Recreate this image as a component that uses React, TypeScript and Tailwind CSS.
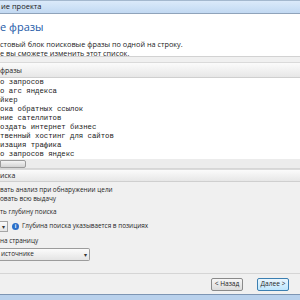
import React from 'react';

const phrases = [
  'о запросов',
  'о агс яндекса',
  'йкер',
  'ока обратных ссылок',
  'ние сателлитов',
  'оздать интернет бизнес',
  'твенный хостинг для сайтов',
  'изация трафика',
  'о запросов яндекс',
];

const SectionBand = ({ label, h }: { label: string; h: string }) => (
  <div className={`${h} flex items-center border-t border-b border-t-[#dadada] border-b-[#cfcfcf] bg-gradient-to-b from-[#fbfbfb] to-[#e7e7e7] text-[7px] text-[#1e1e1e]`}>
    {label}
  </div>
);

export default function App() {
  return (
    <div className="w-[300px] h-[300px] overflow-hidden flex flex-col bg-[#f0f0f0] font-['Open_Sans','Noto_Sans',sans-serif] leading-none">
      {/* Title bar */}
      <div className="h-[14px] shrink-0 flex items-center border-t border-b border-t-[#a4b8ce] border-b-[#8fa3ba] bg-gradient-to-b from-[#dbeafa] to-[#c2d9f2] text-[7.5px] text-[#1a1a1a] pl-[1px]">
        ие проекта
      </div>

      {/* Header */}
      <div className="h-[43px] shrink-0 bg-white border-b border-[#d2d2d2] flex flex-col pt-[6px]">
        <div className="text-[11px] text-[#1c5aa8] leading-[14px]">е фразы</div>
        <div className="mt-[6px] text-[7.3px] text-[#222] leading-[8px]">стовый блок поисковые фразы по одной на строку.</div>
        <div className="text-[7.3px] text-[#222] leading-[8px] mt-[1px]">е вы сможете изменить этот список.</div>
      </div>

      <div className="h-[5px] shrink-0" />
      <SectionBand label="фразы" h="h-[16px] shrink-0" />

      {/* Phrase list */}
      <div className="h-[81px] shrink-0 bg-white flex flex-col font-['Liberation_Mono','DejaVu_Sans_Mono',monospace] text-[7.3px] text-[#1a1a1a]">
        {phrases.map((p, i) => (
          <div key={i} className="h-[9px] flex items-center whitespace-pre">{p}</div>
        ))}
      </div>

      {/* Horizontal scrollbar */}
      <div className="h-[10px] shrink-0 flex items-center bg-[#ececec] border-b border-[#d6d6d6]">
        <div className="h-[8px] w-[26px] rounded-r-[2px] border border-[#9b9b9b] bg-gradient-to-b from-[#f4f4f4] to-[#d4d4d4]" />
      </div>

      <SectionBand label="иска" h="h-[13px] shrink-0" />

      {/* Options */}
      <div className="flex-1 flex flex-col text-[6.4px] text-[#1e1e1e]">
        <div className="h-[4px]" />
        <div className="h-[9px] flex items-center">вать анализ при обнаружении цели</div>
        <div className="h-[9px] flex items-center">овать всю выдачу</div>
        <div className="h-[4px]" />
        <div className="h-[9px] flex items-center">ть глубину поиска</div>
        <div className="h-[4px]" />
        <div className="h-[11px] flex items-center">
          <div className="h-[11px] w-[8px] border border-l-0 border-[#a5a5a5] bg-gradient-to-b from-[#fafafa] to-[#e6e6e6] flex items-center justify-center text-[6px] text-[#333]">▾</div>
          <div className="ml-[4px] w-[7px] h-[7px] rounded-full bg-[#2a6fc9] text-white text-[5px] font-bold flex items-center justify-center">i</div>
          <div className="ml-[3px] whitespace-nowrap">Глубина поиска указывается в позициях</div>
        </div>
        <div className="h-[5px]" />
        <div className="h-[9px] flex items-center">на страницу</div>
        <div className="h-[2px]" />
        <div className="h-[13px] w-[90px] flex items-center justify-between border border-l-0 border-[#9c9c9c] rounded-r-[2px] bg-gradient-to-b from-[#fbfbfb] to-[#e4e4e4] pl-[1px] pr-[2px]">
          <span>источнике</span>
          <span className="text-[6px] text-[#333]">▾</span>
        </div>
      </div>

      {/* Footer */}
      <div className="h-[21px] shrink-0 border-t border-[#d5d5d5] flex items-center justify-end gap-[14px] pr-[11px] text-[6.6px] text-[#1e1e1e]">
        <div className="h-[13px] w-[32px] rounded-[2px] border border-[#8a8a8a] bg-gradient-to-b from-[#f6f6f6] to-[#dcdcdc] flex items-center justify-center">&lt; Назад</div>
        <div className="h-[13px] w-[32px] rounded-[2px] border border-[#3c7fb1] bg-gradient-to-b from-[#eaf6fd] to-[#bee6fd] flex items-center justify-center">Далее &gt;</div>
      </div>
      <div className="h-[6px] shrink-0 border-t border-[#7d95b3] bg-[#b9d1ec]" />
    </div>
  );
}
